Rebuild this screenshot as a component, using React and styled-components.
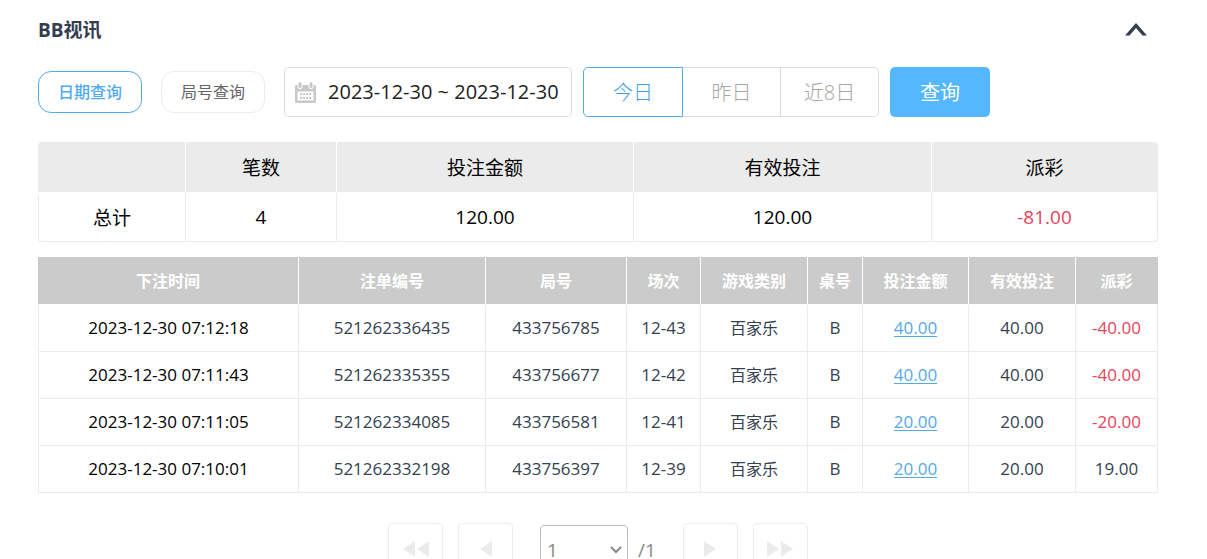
import React, { useState } from "react";
import styled, { createGlobalStyle } from "styled-components";

const GlobalStyle = createGlobalStyle`
  * {
    box-sizing: border-box;
  }
  html {
    scrollbar-width: none;
  }
  body {
    margin: 0;
    background: #fff;
  }
  body, button, input, select {
    font-family: "Open Sans", "Noto Sans CJK SC", sans-serif;
  }
`;

const Page = styled.main`
  padding: 14px 49px 40px 38px;
`;

const TitleBar = styled.header`
  display: flex;
  align-items: center;
  justify-content: space-between;
  height: 32px;
  padding-right: 11px;
`;

const Title = styled.h1`
  margin: 0;
  font-size: 19px;
  line-height: 32px;
  font-weight: 700;
  color: #343c50;
`;

const CollapseButton = styled.button`
  display: flex;
  padding: 0;
  border: 0;
  background: none;
  color: #343f50;
  cursor: pointer;
`;

const Toolbar = styled.div`
  display: flex;
  flex-wrap: wrap;
  align-items: center;
  gap: 11px;
  margin-top: 21px;
`;

const Tabs = styled.div`
  display: flex;
  gap: 19px;
  margin-right: 8px;
`;

const Tab = styled.button`
  height: 42px;
  padding: 0 19px 2px;
  border: 1px solid ${({ $active }) => ($active ? "#4faaea" : "#ececec")};
  border-radius: 13px;
  background: #fff;
  font-size: 16px;
  font-weight: ${({ $active }) => ($active ? 500 : 400)};
  color: ${({ $active }) => ($active ? "#4faaf5" : "#666")};
  cursor: pointer;
`;

const DateField = styled.label`
  display: flex;
  align-items: center;
  gap: 12px;
  width: 288px;
  height: 50px;
  padding: 0 9px 0 10px;
  border: 1px solid #dcdcdc;
  border-radius: 5px;
  color: #c8c8c8;
`;

const DateInput = styled.input`
  flex: 1;
  min-width: 0;
  padding: 0 0 2px;
  border: 0;
  outline: 0;
  background: none;
  font-size: 20px;
  color: #222;
`;

const Segments = styled.div`
  display: flex;
`;

const Segment = styled.button`
  width: 98px;
  height: 50px;
  padding: 0 0 2px;
  border: 1px solid ${({ $active }) => ($active ? "#4faaea" : "#dcdcdc")};
  border-left-width: 0;
  background: #fff;
  font-size: 20px;
  font-weight: 300;
  color: ${({ $active }) => ($active ? "#3a9df0" : "#a6a6a6")};
  cursor: pointer;

  &:first-child {
    width: 100px;
    border-left-width: 1px;
    border-radius: 5px 0 0 5px;
  }
  &:last-child {
    border-radius: 0 5px 5px 0;
  }
`;

const SearchButton = styled.button`
  width: 100px;
  height: 50px;
  padding: 0 0 2px;
  border: 0;
  border-radius: 5px;
  background: #55b8ff;
  font-size: 20px;
  color: #fff;
  cursor: pointer;
`;

const Table = styled.table`
  width: 100%;
  table-layout: fixed;
  border-collapse: separate;
  border-spacing: 0;
  text-align: center;

  th, td {
    padding: 0;
    border-right: 1px solid #ebebeb;
    border-bottom: 1px solid #ebebeb;
  }
  th {
    border-color: #fff;
  }
  td:first-child,
  tbody th {
    border-left: 1px solid #ebebeb;
  }
`;

const SummaryTable = styled(Table)`
  margin-top: 25px;
  font-size: 19px;
  line-height: 26px;
  color: #000;

  th {
    height: 51px;
    padding-top: 2px;
    font-weight: 400;
    background: #ebebeb;
  }
  th:first-child {
    border-top-left-radius: 4px;
  }
  th:last-child {
    border-top-right-radius: 4px;
    border-right-color: #ebebeb;
  }
  tbody th {
    height: 49px;
    background: #fff;
    border-color: #ebebeb;
    border-radius: 0 0 0 4px;
  }
  td:last-child {
    border-bottom-right-radius: 4px;
  }
`;

const RecordTable = styled(Table)`
  margin-top: 15px;
  font-size: 17px;
  line-height: 24px;
  color: #343f50;

  th {
    height: 48px;
    font-size: 16px;
    font-weight: 700;
    color: #fff;
    background: #cbcbcb;
  }
  th:last-child {
    border-right-color: #cbcbcb;
  }
  td {
    height: 47px;
  }
  td:first-child {
    color: #000;
  }
`;

const GameName = styled.span`
  font-size: 16px;
`;

const Payoff = styled.span`
  color: ${({ $value }) => ($value < 0 ? "#e8435a" : "inherit")};
`;

const BetLink = styled.a`
  color: #55a9e8;
  text-decoration: underline;
  text-decoration-thickness: 1px;
  text-underline-offset: 2px;
`;

const Pager = styled.nav`
  display: flex;
  justify-content: center;
  gap: 27px;
  margin-top: 30px;
`;

const PagerGroup = styled.div`
  display: flex;
  gap: 15px;
`;

const PagerButton = styled.button`
  display: flex;
  align-items: center;
  justify-content: center;
  width: 55px;
  height: 52px;
  padding: 0;
  border: 1px solid #ececec;
  border-radius: 4px;
  background: #fff;
  color: #ebebeb;
`;

const PageChooser = styled.label`
  display: flex;
  align-items: center;
  gap: 10px;
  padding-top: 2px;
  font-size: 19px;
  color: #888;
`;

const SelectBox = styled.span`
  display: grid;
  align-items: center;
  width: 88px;
  height: 50px;
  border: 1px solid #bbb;
  border-radius: 4px;

  > * {
    grid-area: 1 / 1;
  }
  > svg {
    justify-self: end;
    margin-right: 5px;
    pointer-events: none;
  }
`;

const PageSelect = styled.select`
  width: 100%;
  height: 100%;
  padding: 0 6px;
  border: 0;
  outline: 0;
  appearance: none;
  background: none;
  font-size: 19px;
  color: #888;
`;

const CalendarIcon = () => (
  <svg width="21" height="21" viewBox="0 0 21 21" aria-hidden="true">
    <path
      fill="currentColor"
      fillRule="evenodd"
      d="M1.500 3H2.500v1.500a2.500 2.500 0 0 0 5 0V3h6v1.500a2.500 2.500 0 0 0 5 0V3h1A1.500 1.500 0 0 1 21 4.500v15a1.500 1.500 0 0 1-1.500 1.500h-18A1.500 1.500 0 0 1 0 19.500v-15A1.500 1.500 0 0 1 1.500 3zM2.500 9.500v9h16v-9z"
    />
    <path
      stroke="currentColor"
      strokeWidth="3"
      strokeLinecap="round"
      d="M5 1.500v3M16 1.500v3"
    />
    <path
      fill="currentColor"
      d="M5 11h2v2H5zM8 11h2v2H8zM11 11h2v2h-2zM14 11h2v2h-2zM5 15h2v2H5zM8 15h2v2H8zM11 15h2v2h-2zM14 15h2v2h-2z"
    />
  </svg>
);

const ChevronIcon = () => (
  <svg width="22" height="14" viewBox="0 0 22 14" aria-hidden="true">
    <path d="M0 12.500L11 0l11 12.500h-4.500L11 5l-6.500 7.500z" fill="currentColor" />
  </svg>
);

const ArrowIcon = ({ double, back }) => (
  <svg
    width={double ? 26 : 12}
    height="16"
    viewBox={double ? "0 0 26 16" : "0 0 12 16"}
    aria-hidden="true"
  >
    <g fill="currentColor" transform={back ? `matrix(-1 0 0 1 ${double ? 26 : 12} 0)` : undefined}>
      <path d="M0 0l12 8L0 16z" />
      {double && <path d="M14 0l12 8l-12 8z" />}
    </g>
  </svg>
);

const quickRanges = ["今日", "昨日", "近8日"];

const summaryColumns = [
  { label: "", width: 148 },
  { label: "笔数", width: 151 },
  { label: "投注金额", width: 297 },
  { label: "有效投注", width: 298 },
  { label: "派彩", width: 226 },
];

const recordColumns = [
  { label: "下注时间", width: 261 },
  { label: "注单编号", width: 187 },
  { label: "局号", width: 141 },
  { label: "场次", width: 74 },
  { label: "游戏类别", width: 107 },
  { label: "桌号", width: 55 },
  { label: "投注金额", width: 106 },
  { label: "有效投注", width: 107 },
  { label: "派彩", width: 82 },
];

const records = [
  { time: "2023-12-30 07:12:18", id: "521262336435", round: "433756785", shoe: "12-43", bet: 40, payoff: -40 },
  { time: "2023-12-30 07:11:43", id: "521262335355", round: "433756677", shoe: "12-42", bet: 40, payoff: -40 },
  { time: "2023-12-30 07:11:05", id: "521262334085", round: "433756581", shoe: "12-41", bet: 20, payoff: -20 },
  { time: "2023-12-30 07:10:01", id: "521262332198", round: "433756397", shoe: "12-39", bet: 20, payoff: 19 },
];

const TableHead = ({ columns }) => (
  <>
    <colgroup>
      {columns.map((column, i) => (
        <col key={i} width={column.width} />
      ))}
    </colgroup>
    <thead>
      <tr>
        {columns.map((column, i) => (
          <th key={i} scope="col">{column.label}</th>
        ))}
      </tr>
    </thead>
  </>
);

const App = () => {
  const [tab, setTab] = useState("date");
  const [range, setRange] = useState("今日");
  const [dates, setDates] = useState("2023-12-30 ~ 2023-12-30");

  return (
    <Page>
      <GlobalStyle />
      <TitleBar>
        <Title>BB视讯</Title>
        <CollapseButton type="button" aria-label="收起">
          <ChevronIcon />
        </CollapseButton>
      </TitleBar>

      <Toolbar>
        <Tabs>
          <Tab type="button" $active={tab === "date"} onClick={() => setTab("date")}>日期查询</Tab>
          <Tab type="button" $active={tab === "round"} onClick={() => setTab("round")}>局号查询</Tab>
        </Tabs>
        <DateField>
          <CalendarIcon />
          <DateInput aria-label="日期" value={dates} onChange={(e) => setDates(e.target.value)} />
        </DateField>
        <Segments>
          {quickRanges.map((item) => (
            <Segment key={item} type="button" $active={range === item} onClick={() => setRange(item)}>
              {item}
            </Segment>
          ))}
        </Segments>
        <SearchButton type="button">查询</SearchButton>
      </Toolbar>

      <SummaryTable>
        <TableHead columns={summaryColumns} />
        <tbody>
          <tr>
            <th scope="row">总计</th>
            <td>4</td>
            <td>120.00</td>
            <td>120.00</td>
            <td><Payoff $value={-81}>-81.00</Payoff></td>
          </tr>
        </tbody>
      </SummaryTable>

      <RecordTable>
        <TableHead columns={recordColumns} />
        <tbody>
          {records.map((record) => (
            <tr key={record.id}>
              <td>{record.time}</td>
              <td>{record.id}</td>
              <td>{record.round}</td>
              <td>{record.shoe}</td>
              <td><GameName>百家乐</GameName></td>
              <td>B</td>
              <td><BetLink href="#">{record.bet.toFixed(2)}</BetLink></td>
              <td>{record.bet.toFixed(2)}</td>
              <td><Payoff $value={record.payoff}>{record.payoff.toFixed(2)}</Payoff></td>
            </tr>
          ))}
        </tbody>
      </RecordTable>

      <Pager aria-label="分页">
        <PagerGroup>
          <PagerButton type="button" aria-label="首页"><ArrowIcon double back /></PagerButton>
          <PagerButton type="button" aria-label="上一页"><ArrowIcon back /></PagerButton>
        </PagerGroup>
        <PageChooser>
          <SelectBox>
            <PageSelect aria-label="页码" defaultValue="1">
              <option value="1">1</option>
            </PageSelect>
            <svg width="12" height="8" viewBox="0 0 12 8" aria-hidden="true">
              <path d="M1 1l5 5l5-5" fill="none" stroke="currentColor" strokeWidth="2" />
            </svg>
          </SelectBox>
          /1
        </PageChooser>
        <PagerGroup>
          <PagerButton type="button" aria-label="下一页"><ArrowIcon /></PagerButton>
          <PagerButton type="button" aria-label="末页"><ArrowIcon double /></PagerButton>
        </PagerGroup>
      </Pager>
    </Page>
  );
};

export default App;
